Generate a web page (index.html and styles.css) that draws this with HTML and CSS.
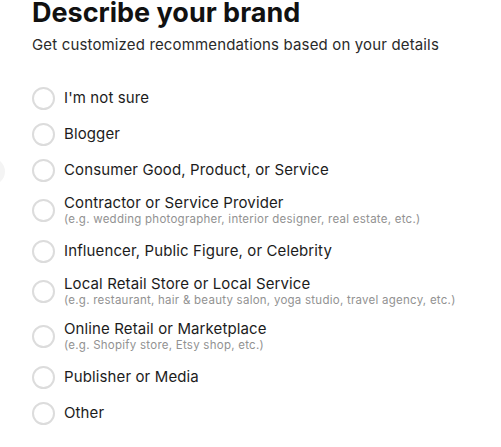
FILE: index.html
```html
<!DOCTYPE html>
<html>
<head>
<meta charset="utf-8">
<link rel="stylesheet" href="styles.css">
</head>
<body>
<div class="edge-btn"></div>
<main class="page">
  <h1 class="title">Describe your brand</h1>
  <p class="subtitle">Get customized recommendations based on your details</p>
  <ul class="options">
    <li class="option"><span class="radio"></span><div class="text"><div class="label">I'm not sure</div></div></li>
    <li class="option"><span class="radio"></span><div class="text"><div class="label">Blogger</div></div></li>
    <li class="option"><span class="radio"></span><div class="text"><div class="label">Consumer Good, Product, or Service</div></div></li>
    <li class="option"><span class="radio"></span><div class="text"><div class="label">Contractor or Service Provider</div><div class="hint">(e.g. wedding photographer, interior designer, real estate, etc.)</div></div></li>
    <li class="option"><span class="radio"></span><div class="text"><div class="label">Influencer, Public Figure, or Celebrity</div></div></li>
    <li class="option"><span class="radio"></span><div class="text"><div class="label">Local Retail Store or Local Service</div><div class="hint">(e.g. restaurant, hair &amp; beauty salon, yoga studio, travel agency, etc.)</div></div></li>
    <li class="option"><span class="radio"></span><div class="text"><div class="label">Online Retail or Marketplace</div><div class="hint">(e.g. Shopify store, Etsy shop, etc.)</div></div></li>
    <li class="option"><span class="radio"></span><div class="text"><div class="label">Publisher or Media</div></div></li>
    <li class="option"><span class="radio"></span><div class="text"><div class="label">Other</div></div></li>
  </ul>
</main>
</body>
</html>
```
FILE: styles.css
```css
html, body {
  margin: 0;
  padding: 0;
  background: #fff;
  overflow: hidden;
}
body {
  font-family: Inter, "Liberation Sans", Arial, sans-serif;
  color: #1c1c1c;
  position: relative;
}
.edge-btn {
  position: absolute;
  left: -22px;
  top: 158px;
  width: 27px;
  height: 27px;
  border-radius: 50%;
  background: #f4f4f4;
}
.page {
  padding: 0 0 0 32px;
}
.title {
  margin: 0;
  font-size: 27px;
  line-height: 26px;
  font-weight: 700;
  color: #111;
  letter-spacing: 0;
}
.subtitle {
  margin: 9px 0 0 0;
  font-size: 15px;
  line-height: 20px;
  letter-spacing: 0.15px;
  color: #2a2a2a;
}
.options {
  list-style: none;
  margin: 25px 0 0 0;
  padding: 0;
}
.option {
  display: flex;
  align-items: center;
  gap: 9px;
  padding: 6px 0;
  min-height: 24px;
}
.radio {
  flex: none;
  width: 19px;
  height: 19px;
  border: 2px solid #dcdcdc;
  border-radius: 50%;
}
.label {
  font-size: 15px;
  line-height: 18px;
  letter-spacing: 0.12px;
  color: #1c1c1c;
}
.hint {
  font-size: 11.5px;
  line-height: 15px;
  letter-spacing: 0.25px;
  color: #929292;
}
```
